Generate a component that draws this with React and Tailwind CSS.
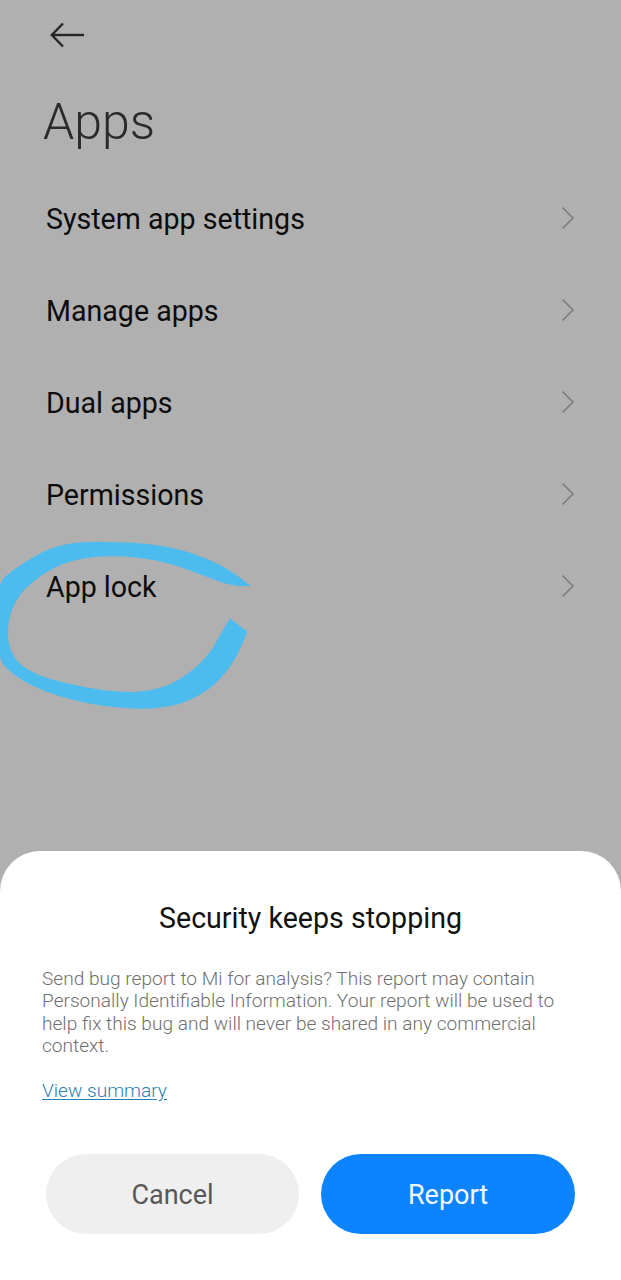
import React from "react";

const font = { fontFamily: "Roboto, sans-serif" };
const items = ["System app settings", "Manage apps", "Dual apps", "Permissions", "App lock"];

// marker outline: outer edge from the tip round to the blunt end, then back along the inner edge
const outerEdge = [
  [752, 168], [700, 125], [620, 85], [540, 58], [440, 40], [330, 35], [230, 37], [160, 50], [100, 80], [40, 120], [-10, 160],
  [-10, 385], [40, 435], [100, 470], [180, 500], [260, 520], [330, 530], [390, 535], [440, 537], [510, 530], [570, 512], [630, 477], [680, 427], [720, 362], [742, 305],
];
const innerEdge = [
  [690, 265], [660, 315], [630, 370], [580, 420], [520, 460], [460, 480], [390, 488], [300, 480], [200, 460], [110, 435], [55, 400], [30, 360], [22, 310], [30, 250], [50, 210], [70, 180], [130, 130], [200, 95], [280, 80], [370, 78], [460, 88], [540, 110], [620, 140], [700, 170], [752, 168],
];

const smooth = (pts) => {
  let d = "";
  for (let i = 1; i < pts.length - 1; i++) {
    const mx = i === pts.length - 2 ? pts[i + 1][0] : (pts[i][0] + pts[i + 1][0]) / 2;
    const my = i === pts.length - 2 ? pts[i + 1][1] : (pts[i][1] + pts[i + 1][1]) / 2;
    d += ` Q${pts[i][0]} ${pts[i][1]} ${mx} ${my}`;
  }
  return d;
};

const markerPath = `M${outerEdge[0][0]} ${outerEdge[0][1]}${smooth(outerEdge)} L${innerEdge[0][0]} ${innerEdge[0][1]}${smooth(innerEdge)} Z`;

function Chevron() {
  return (
    <svg width="14" height="24" viewBox="0 0 14 24" fill="none" stroke="#7c7c7c" strokeWidth="1.6" className="block mb-[2px]">
      <path d="M1.5 1.5 L12 12 L1.5 22.5" />
    </svg>
  );
}

export default function App() {
  return (
    <div className="relative w-[621px] h-[1280px] overflow-hidden bg-[#b0b0b0] flex flex-col font-['Roboto',sans-serif]" style={font}>
      <div className="pl-[50px] pt-[21px]">
        <svg width="34" height="28" viewBox="0 0 34 28" fill="none" stroke="#262626" strokeWidth="2.4" className="block">
          <path d="M34 14 H2" />
          <path d="M13 2.5 L1.8 14 L13 25.5" />
        </svg>
      </div>
      <h1 className="pl-[43px] mt-[43px] text-[50px] leading-[60px] font-light text-[#2a2a2a]">Apps</h1>

      <div className="mt-[21px] flex flex-col">
        {items.map((label) => (
          <div key={label} className="h-[92px] pl-[46px] pr-[46px] flex items-center justify-between">
            <span className="text-[28.6px] leading-[36px] text-[#0c0c0c]">{label}</span>
            <Chevron />
          </div>
        ))}
      </div>

      {/* marker circle drawn over the screenshot */}
      <svg className="absolute left-0 top-[530px]" width="270" height="190" viewBox="0 0 810 570">
        <path fill="#4cbbee" d={markerPath} />
      </svg>

      <div className="absolute left-0 right-0 bottom-0 h-[429px] bg-white rounded-t-[40px] flex flex-col">
        <h2 className="mt-[50px] text-center text-[28.6px] leading-[34px] text-[#111111]">Security keeps stopping</h2>
        <p className="mt-[33px] pl-[42px] pr-[40px] text-[19.1px] leading-[22.3px] font-light text-[#6f6f6f]">
          Send bug report to Mi for analysis? This report may contain Personally Identifiable Information. Your report will be used to help fix this bug and will never be shared in any commercial context.
        </p>
        <a className="mt-[23px] ml-[42px] w-fit text-[19.1px] leading-[22px] font-light text-[#2a80b0] underline underline-offset-2">View summary</a>
        <div className="mt-[52px] px-[46px] flex gap-[22px]">
          <button className="w-[253px] h-[80px] pt-[2px] rounded-full bg-[#efefef] text-[27px] text-[#585858]">Cancel</button>
          <button className="w-[254px] h-[80px] pt-[2px] rounded-full bg-[#0d84fd] text-[27px] text-[#f2f8ff]">Report</button>
        </div>
      </div>
    </div>
  );
}
